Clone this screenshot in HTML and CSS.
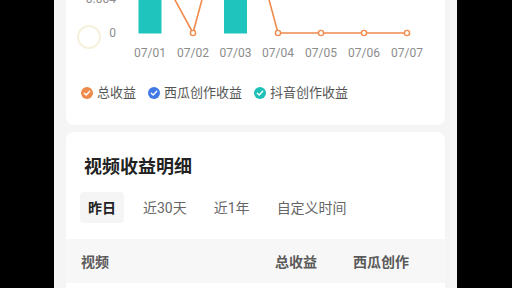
FILE: index.html
```html
<!DOCTYPE html>
<html lang="zh-CN">
<head>
    <meta charset="UTF-8">
    <meta name="viewport" content="width=device-width, initial-scale=1.0">
    <title>视频收益</title>
    <link rel="stylesheet" href="styles.css">
</head>
<body>
    <div class="phone">
        <!-- Carte du graphique -->
        <div class="card chart-card">
            <svg class="chart" viewBox="66 0 379 62" width="379" height="62">
                <circle cx="89" cy="37" r="11" fill="none" stroke="#f6f1dc" stroke-width="2"/>
                <text class="axis" x="116" y="3" text-anchor="end">0.004</text>
                <text class="axis" x="116" y="37" text-anchor="end">0</text>

                <rect x="138.5" y="-20" width="23" height="53.5" fill="#1fc5bd"/>
                <rect x="224" y="-20" width="23" height="53.5" fill="#1fc5bd"/>

                <polyline points="150,-46 193,33 235.5,-125 278,33 321,33 364,33 407,33"
                          fill="none" stroke="#ef8a4c" stroke-width="1.6"/>
                <circle cx="193" cy="33" r="2.6" fill="#fff" stroke="#ef8a4c" stroke-width="1.4"/>
                <circle cx="278" cy="33" r="2.6" fill="#fff" stroke="#ef8a4c" stroke-width="1.4"/>
                <circle cx="321" cy="33" r="2.6" fill="#fff" stroke="#ef8a4c" stroke-width="1.4"/>
                <circle cx="364" cy="33" r="2.6" fill="#fff" stroke="#ef8a4c" stroke-width="1.4"/>
                <circle cx="407" cy="33" r="2.6" fill="#fff" stroke="#ef8a4c" stroke-width="1.4"/>

                <text class="axis" x="150" y="57" text-anchor="middle">07/01</text>
                <text class="axis" x="193" y="57" text-anchor="middle">07/02</text>
                <text class="axis" x="235.5" y="57" text-anchor="middle">07/03</text>
                <text class="axis" x="278" y="57" text-anchor="middle">07/04</text>
                <text class="axis" x="321" y="57" text-anchor="middle">07/05</text>
                <text class="axis" x="364" y="57" text-anchor="middle">07/06</text>
                <text class="axis" x="407" y="57" text-anchor="middle">07/07</text>
            </svg>

            <div class="legend">
                <span class="legend-item">
                    <svg class="check" viewBox="0 0 12 12"><circle cx="6" cy="6" r="6" fill="#ef8a4c"/><polyline points="3.3,6.2 5.2,8 8.7,4.3" fill="none" stroke="#fff" stroke-width="1.4" stroke-linecap="round" stroke-linejoin="round"/></svg>
                    总收益
                </span>
                <span class="legend-item">
                    <svg class="check" viewBox="0 0 12 12"><circle cx="6" cy="6" r="6" fill="#4079e6"/><polyline points="3.3,6.2 5.2,8 8.7,4.3" fill="none" stroke="#fff" stroke-width="1.4" stroke-linecap="round" stroke-linejoin="round"/></svg>
                    西瓜创作收益
                </span>
                <span class="legend-item">
                    <svg class="check" viewBox="0 0 12 12"><circle cx="6" cy="6" r="6" fill="#1fc0b8"/><polyline points="3.3,6.2 5.2,8 8.7,4.3" fill="none" stroke="#fff" stroke-width="1.4" stroke-linecap="round" stroke-linejoin="round"/></svg>
                    抖音创作收益
                </span>
            </div>
        </div>

        <!-- Détail des revenus -->
        <div class="card detail-card">
            <h2 class="title">视频收益明细</h2>
            <div class="tabs">
                <span class="tab active">昨日</span>
                <span class="tab">近30天</span>
                <span class="tab">近1年</span>
                <span class="tab">自定义时间</span>
            </div>
            <div class="table-head">
                <span>视频</span>
                <span>总收益</span>
                <span>西瓜创作</span>
            </div>
        </div>
    </div>
</body>
</html>
```

FILE: styles.css
```css
body {
    margin: 0;
    background-color: #000;
    font-family: Roboto, "Noto Sans CJK SC", sans-serif;
}

.phone {
    width: 403px;
    height: 288px;
    margin-left: 54px;
    padding: 0 12px;
    box-sizing: border-box;
    background-color: #f5f5f5;
    overflow: hidden;
}

.card {
    background: #fff;
    border-radius: 8px;
}

.chart-card {
    border-top-left-radius: 0;
    border-top-right-radius: 0;
    padding-bottom: 24px;
}

.chart {
    display: block;
}

.axis {
    font-family: Roboto, sans-serif;
    font-size: 12px;
    fill: #8c8c8c;
}

.legend {
    display: flex;
    gap: 12px;
    margin-top: 23px;
    padding-left: 15px;
    font-size: 13px;
    line-height: 16px;
    color: #555;
}

.legend-item {
    display: flex;
    align-items: center;
    gap: 4px;
}

.check {
    width: 12px;
    height: 12px;
}

.detail-card {
    margin-top: 7px;
    padding-top: 23px;
    height: 200px;
}

.title {
    margin: 0;
    padding-left: 18px;
    font-size: 18px;
    line-height: 24px;
    font-weight: bold;
    color: #222;
}

.tabs {
    display: flex;
    gap: 11px;
    margin-top: 13px;
    padding-left: 14px;
}

.tab {
    padding: 0 8px;
    height: 31px;
    line-height: 33px;
    font-size: 14px;
    color: #666;
    border-radius: 4px;
}

.tab.active {
    background-color: #f5f5f5;
    color: #222;
    font-weight: bold;
}

.table-head {
    display: grid;
    grid-template-columns: 194px 78px 1fr;
    margin-top: 16px;
    padding-left: 15px;
    height: 44px;
    line-height: 46px;
    background-color: #f7f7f7;
    font-size: 14px;
    font-weight: bold;
    color: #5a5a5a;
}
```
